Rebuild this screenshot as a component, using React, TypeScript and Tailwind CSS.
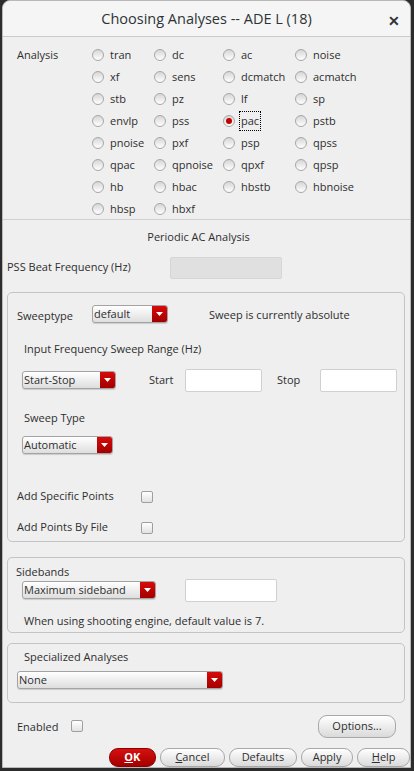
import React from 'react';

const rows: string[][] = [
  ['tran', 'dc', 'ac', 'noise'],
  ['xf', 'sens', 'dcmatch', 'acmatch'],
  ['stb', 'pz', 'lf', 'sp'],
  ['envlp', 'pss', 'pac', 'pstb'],
  ['pnoise', 'pxf', 'psp', 'qpss'],
  ['qpac', 'qpnoise', 'qpxf', 'qpsp'],
  ['hb', 'hbac', 'hbstb', 'hbnoise'],
  ['hbsp', 'hbxf'],
];

function Radio({ label, checked }: { label: string; checked?: boolean }) {
  return (
    <div className="flex items-center h-[22px]">
      <span className="w-[12px] h-[12px] rounded-full border border-[#a7a7a7] bg-gradient-to-b from-[#d6d6d6] to-white flex items-center justify-center shrink-0">
        {checked && <span className="w-[6px] h-[6px] rounded-full bg-[#c40000]" />}
      </span>
      <span
        className={`ml-[5px] leading-[18px] px-[1px] ${checked ? 'outline outline-1 outline-dotted outline-black' : ''}`}
      >
        {label}
      </span>
    </div>
  );
}

function Dropdown({ label, width }: { label: string; width: string }) {
  return (
    <div
      className={`${width} h-[18px] flex rounded-[3px] border border-[#a3a3a3] bg-gradient-to-b from-white to-[#dedede] shadow-[0_1px_1px_rgba(0,0,0,0.15)] overflow-hidden`}
    >
      <span className="flex-1 pl-[1px] leading-[16px] truncate">{label}</span>
      <span className="w-[15px] bg-gradient-to-b from-[#d80a0a] to-[#a30000] flex items-center justify-center">
        <svg width="7" height="4" viewBox="0 0 7 4">
          <path d="M0 0 L7 0 L3.5 4 Z" fill="#fff" />
        </svg>
      </span>
    </div>
  );
}

function Checkbox() {
  return (
    <span className="w-[12px] h-[12px] rounded-[2px] border border-[#9f9f9f] bg-gradient-to-b from-white to-[#e2e2e2] inline-block" />
  );
}

function Input({ width }: { width: string }) {
  return <div className={`${width} h-[23px] bg-white border border-[#d0d0d0] rounded-[2px]`} />;
}

function Btn({ children, width }: { children: React.ReactNode; width: string }) {
  return (
    <div
      className={`${width} h-[19px] rounded-[9px] border border-[#a8a8a8] bg-gradient-to-b from-white to-[#dadada] flex items-center justify-center`}
    >
      {children}
    </div>
  );
}

export default function App() {
  return (
    <div
      className="w-[414px] h-[771px] bg-[#2c2c2c] overflow-hidden text-[11px] text-[#2e2e2e]"
      style={{ fontFamily: '"Open Sans", "Noto Sans", sans-serif' }}
    >
      <div className="ml-[2px] w-[409px] h-[768px] bg-[#efefef] rounded-t-[8px] border border-[#b9b9b9] flex flex-col">
        {/* Title bar */}
        <div className="h-[36px] relative flex items-center justify-center border-b border-[#cacaca] bg-[#f5f5f5] rounded-t-[8px]">
          <span className="text-[14.5px] font-medium text-[#2e3436]">Choosing Analyses -- ADE L (18)</span>
          <span className="absolute right-[10px] top-[9px] text-[14px] font-bold text-[#2e3436]">✕</span>
        </div>

        {/* Analysis radios */}
        <div className="h-[183px] border-b border-[#cfcfcf] flex pl-[14px] pt-[7px]">
          <div className="w-[75px] leading-[22px]">Analysis</div>
          <div className="grid grid-cols-[62px_69px_72px_80px] content-start">
            {rows.flat().map((r) => (
              <Radio key={r} label={r} checked={r === 'pac'} />
            ))}
          </div>
        </div>

        <div className="h-[34px] flex items-center justify-center pr-[16px] pt-[1px]">Periodic AC Analysis</div>

        <div className="h-[28px] flex items-center pl-[4px]">
          <span className="w-[163px]">PSS Beat Frequency (Hz)</span>
          <div className="w-[112px] h-[22px] bg-[#e0e0e0] border border-[#d6d6d6] rounded-[2px]" />
        </div>

        {/* Sweep group */}
        <div className="mt-[10px] ml-[4px] w-[398px] h-[251px] border border-[#c4c4c4] rounded-[5px] flex flex-col">
          <div className="mt-[12px] h-[18px] flex items-center">
            <span className="pl-[9px] w-[84px] pt-[5px]">Sweeptype</span>
            <Dropdown label="default" width="w-[76px]" />
            <span className="ml-[41px] pt-[3px]">Sweep is currently absolute</span>
          </div>
          <div className="mt-[17px] pl-[16px] leading-[18px]">Input Frequency Sweep Range (Hz)</div>
          <div className="mt-[11px] flex items-center pl-[14px]">
            <Dropdown label="Start-Stop" width="w-[94px]" />
            <span className="ml-[33px] w-[36px]">Start</span>
            <Input width="w-[77px]" />
            <span className="ml-[15px] w-[43px]">Stop</span>
            <Input width="w-[77px]" />
          </div>
          <div className="mt-[17px] pl-[16px] leading-[18px]">Sweep Type</div>
          <div className="mt-[9px] pl-[14px]">
            <Dropdown label="Automatic" width="w-[91px]" />
          </div>
          <div className="mt-[35px] h-[16px] flex items-center pl-[9px]">
            <span className="w-[124px]">Add Specific Points</span>
            <Checkbox />
          </div>
          <div className="mt-[15px] h-[16px] flex items-center pl-[9px]">
            <span className="w-[124px]">Add Points By File</span>
            <Checkbox />
          </div>
        </div>

        {/* Sidebands */}
        <div className="mt-[15px] ml-[4px] w-[398px] h-[77px] border border-[#c4c4c4] rounded-[5px] flex flex-col">
          <div className="mt-[8px] pl-[8px] leading-[12px]">Sidebands</div>
          <div className="mt-[1px] flex items-center pl-[14px]">
            <Dropdown label="Maximum sideband" width="w-[134px]" />
            <div className="ml-[29px]">
              <Input width="w-[92px]" />
            </div>
          </div>
          <div className="mt-[11px] pl-[16px] leading-[16px]">When using shooting engine, default value is 7.</div>
        </div>

        {/* Specialized */}
        <div className="mt-[10px] ml-[4px] w-[398px] h-[60px] border border-[#c4c4c4] rounded-[5px] flex flex-col">
          <div className="mt-[5px] pl-[16px] leading-[16px]">Specialized Analyses</div>
          <div className="mt-[6px] pl-[9px]">
            <Dropdown label="None" width="w-[206px]" />
          </div>
        </div>

        {/* Enabled / Options */}
        <div className="mt-[11px] h-[24px] flex items-center pl-[14px] pr-[14px]">
          <span className="w-[54px] pt-[2px]">Enabled</span>
          <Checkbox />
          <div className="ml-auto w-[78px] h-[23px] rounded-[9px] border border-[#a8a8a8] bg-gradient-to-b from-white to-[#dadada] flex items-center justify-center">
            Options...
          </div>
        </div>

        {/* Dialog buttons */}
        <div className="mt-[10px] flex items-center pl-[106px] gap-[4px]">
          <div className="w-[47px] h-[19px] rounded-[9px] border border-[#8a0000] bg-gradient-to-b from-[#d61010] to-[#a50000] flex items-center justify-center text-white font-bold">
            <span>
              <span className="underline">O</span>K
            </span>
          </div>
          <Btn width="w-[66px]">
            <span>
              <span className="underline">C</span>ancel
            </span>
          </Btn>
          <Btn width="w-[68px]">Defaults</Btn>
          <Btn width="w-[53px]">Apply</Btn>
          <Btn width="w-[53px]">
            <span>
              <span className="underline">H</span>elp
            </span>
          </Btn>
        </div>
      </div>
    </div>
  );
}
